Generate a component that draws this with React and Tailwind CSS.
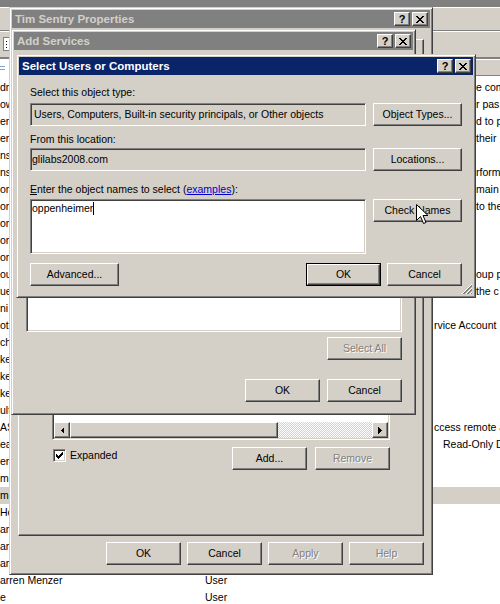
import React from "react";

const RAISED =
  "border border-t-white border-l-white border-r-[#404040] border-b-[#404040] shadow-[inset_-1px_-1px_0_#808080]";
const SUNKEN =
  "border border-t-[#808080] border-l-[#808080] border-r-white border-b-white shadow-[inset_1px_1px_0_#404040,inset_-1px_-1px_0_#d4d0c8] p-[1px]";

function Btn({ children, w = "w-[75px]", disabled = false }) {
  return (
    <div
      className={`${w} h-[23px] shrink-0 flex items-center justify-center bg-[#d4d0c8] ${RAISED} ${
        disabled ? "text-[#808080] [text-shadow:1px_1px_0_#fff]" : "text-black"
      }`}
    >
      {children}
    </div>
  );
}

function DefBtn({ children }) {
  return (
    <div className="w-[75px] h-[23px] shrink-0 border border-black flex">
      <div className={`flex-1 flex items-center justify-center bg-[#d4d0c8] ${RAISED}`}>{children}</div>
    </div>
  );
}

function CapBtn({ children }) {
  return (
    <div className={`w-[16px] h-[14px] shrink-0 bg-[#d4d0c8] flex items-center justify-center ${RAISED}`}>
      {children}
    </div>
  );
}

function XGlyph() {
  return (
    <svg width="8" height="7" viewBox="0 0 8 7" shapeRendering="crispEdges">
      <path d="M0 0h2l2 2.5L6 0h2L5 3.5 8 7H6L4 4.5 2 7H0l3-3.5z" fill="#000" />
    </svg>
  );
}

function Win({ title, active = false, className, children }) {
  return (
    <div
      className={`absolute flex flex-col bg-[#d4d0c8] border border-t-[#d4d0c8] border-l-[#d4d0c8] border-r-[#404040] border-b-[#404040] shadow-[inset_1px_1px_0_#fff,inset_-1px_-1px_0_#808080] p-[2px] ${className}`}
    >
      <div
        className={`h-[18px] shrink-0 flex items-center pl-[3px] pr-[2px] ${
          active ? "bg-[#0a246a] text-white" : "bg-[#808080] text-[#d4d0c8]"
        }`}
      >
        <span className="flex-1 font-bold text-[11.5px] leading-[14px] whitespace-nowrap">{title}</span>
        <CapBtn>
          <span className="font-bold text-[11px] leading-none text-black pt-[1px]">?</span>
        </CapBtn>
        <div className="w-[2px]" />
        <CapBtn>
          <XGlyph />
        </CapBtn>
      </div>
      {children}
    </div>
  );
}

const rows = [
  ["dm", "", "e com", "c"],
  ["ow", "", "r pas", "c"],
  ["ert", "", "d to p", "c"],
  ["en", "", "their", "c"],
  ["ns.", "", "", "c"],
  ["nsl", "", "rform", "c"],
  ["om", "", "main", "c"],
  ["om", "", "to the", "c"],
  ["om", "", "", "c"],
  ["om", "", "", "c"],
  ["om", "", "", "c"],
  ["ou", "", "oup p", "c"],
  ["ue", "", "the c", "c"],
  ["ni", "", "", "u"],
  ["ot", "", "rvice Account", "u"],
  ["ch", "", "", "u"],
  ["ke", "", "", "u"],
  ["ke", "", "", "u"],
  ["ke", "", "", "u"],
  ["ult", "", "", "u"],
  ["AS", "", "ccess remote a", "u"],
  ["ea", "", "Read-Only Do", "r"],
  ["en", "", "", "u"],
  ["m", "", "", "u"],
  ["m", "", "", "s"],
  ["He", "", "", "u"],
  ["am", "", "", "u"],
  ["am", "", "", "u"],
  ["am", "", "", "u"],
  ["arren Menzer", "User", "", "u"],
  ["e", "User", "", "u"],
];

function Background() {
  return (
    <div className="flex flex-col">
      <div className="h-[7px] bg-[#808080]" />
      <div className="h-[23px] bg-[#d4d0c8] border-t border-t-white" />
      <div className="h-[2px] border-y border-t-[#808080] border-b-white" />
      <div className="h-[25px] bg-[#d4d0c8] flex items-start">
        <div className="ml-[3px] mt-[5px] w-[7px] h-[14px] bg-white border border-[#808080] flex flex-col items-center justify-center gap-[2px]">
          <div className="w-[1px] h-[1px] bg-black" />
          <div className="w-[1px] h-[1px] bg-black" />
          <div className="w-[1px] h-[1px] bg-black" />
        </div>
      </div>
      <div className="h-[2px] bg-[#808080]" />
      <div className="h-[17px] flex">
        <div className="w-[10px] bg-white flex flex-col justify-center gap-[2px]">
          <div className="w-[5px] h-[1px] bg-[#7fa6d8]" />
          <div className="w-[5px] h-[1px] bg-[#7fa6d8]" />
        </div>
        <div className="flex-1 bg-[#d4d0c8] border-t border-t-white border-b border-b-[#808080]" />
      </div>
      <div className="h-[3px] bg-white" />
      {rows.map(([name, type, desc, kind], i) => (
        <div
          key={i}
          className={`h-[17px] shrink-0 flex items-center whitespace-nowrap text-black ${
            kind === "s" ? "bg-[#d4d0c8]" : "bg-white"
          }`}
        >
          <div className="w-[205px] shrink-0 overflow-hidden">{name}</div>
          <div className="w-[228px] shrink-0">{type}</div>
          <div
            className={`flex-1 overflow-hidden ${
              kind === "c" ? "pl-[43px]" : kind === "r" ? "pl-[10px]" : "pl-[1px]"
            }`}
          >
            {desc}
          </div>
        </div>
      ))}
    </div>
  );
}

function Arrow({ dir }) {
  return (
    <div className={`w-[16px] h-[16px] shrink-0 bg-[#d4d0c8] flex items-center justify-center ${RAISED}`}>
      <svg width="4" height="7" viewBox="0 0 4 7" shapeRendering="crispEdges">
        {dir === "l" ? <path d="M4 0v7L0.5 3.5z" fill="#000" /> : <path d="M0 0v7l3.5-3.5z" fill="#000" />}
      </svg>
    </div>
  );
}

function TimSentry() {
  return (
    <Win title="Tim Sentry Properties" className="left-[9px] top-[7px] w-[424px] h-[568px]">
      <div className="flex-1 flex flex-col px-[6px]">
        <div className="mt-[11px] h-[497px] flex flex-col pt-[40px] px-[33px] border border-t-white border-l-white border-r-[#404040] border-b-[#404040] shadow-[inset_-1px_-1px_0_#808080]">
          <div className={`h-[360px] bg-white flex flex-col justify-end ${SUNKEN}`}>
            <div className="h-[16px] flex">
              <Arrow dir="l" />
              <div className={`w-[208px] h-[16px] bg-[#d4d0c8] ${RAISED}`} />
              <div className="flex-1 bg-[image:repeating-conic-gradient(#d4d0c8_0%_25%,#ffffff_0%_50%)] bg-[length:2px_2px]" />
              <Arrow dir="r" />
            </div>
          </div>
          <div className="mt-[7px] flex items-start">
            <div className={`mt-[2px] ml-[1px] w-[13px] h-[13px] bg-white flex items-center justify-center ${SUNKEN} p-0`}>
              <svg width="7" height="7" viewBox="0 0 7 7" shapeRendering="crispEdges">
                <path d="M0 2h1v1h1v1h1V3h1V2h1V1h1V0h1v3H6v1H5v1H4v1H3v1H2V6H1V5H0z" fill="#000" />
              </svg>
            </div>
            <span className="ml-[4px] mt-[2px] leading-[13px]">Expanded</span>
            <div className="ml-auto flex gap-[8px]">
              <Btn>Add...</Btn>
              <Btn disabled>Remove</Btn>
            </div>
          </div>
        </div>
        <div className="mt-[6px] flex justify-end gap-[6px]">
          <Btn>OK</Btn>
          <Btn>Cancel</Btn>
          <Btn disabled>Apply</Btn>
          <Btn disabled>Help</Btn>
        </div>
      </div>
    </Win>
  );
}

function AddServices() {
  return (
    <Win title="Add Services" className="left-[11px] top-[29px] w-[405px] h-[386px]">
      <div className="flex-1 flex flex-col pl-[12px] pr-[11px]">
        <div className={`mt-[20px] h-[262px] bg-white ${SUNKEN}`} />
        <div className="mt-[5px] flex justify-end">
          <Btn disabled>Select All</Btn>
        </div>
        <div className="mt-[19px] flex justify-end gap-[7px]">
          <Btn>OK</Btn>
          <Btn>Cancel</Btn>
        </div>
      </div>
    </Win>
  );
}

function SelectUsers() {
  return (
    <Win title="Select Users or Computers" active className="left-[16px] top-[54px] w-[460px] h-[244px]">
      <div className="flex-1 flex flex-col px-[11px]">
        <div className="mt-[10px] leading-[14px]">Select this object type:</div>
        <div className="mt-[4px] flex gap-[7px]">
          <div className={`w-[336px] h-[23px] flex items-center pl-[3px] whitespace-nowrap ${SUNKEN}`}>
            Users, Computers, Built-in security principals, or Other objects
          </div>
          <Btn w="w-[89px]">Object Types...</Btn>
        </div>
        <div className="mt-[6px] leading-[14px]">From this location:</div>
        <div className="mt-[2px] flex gap-[7px]">
          <div className={`w-[336px] h-[23px] flex items-center pl-[1px] ${SUNKEN}`}>glilabs2008.com</div>
          <Btn w="w-[89px]">Locations...</Btn>
        </div>
        <div className="mt-[11px] leading-[14px]">
          <span className="underline">E</span>nter the object names to select (
          <span className="text-[#0000cc] underline">examples</span>):
        </div>
        <div className="mt-[3px] flex items-start gap-[7px]">
          <div className={`w-[336px] h-[55px] bg-white pl-[1px] pt-[2px] ${SUNKEN}`}>
            <div className="flex items-center leading-[13px]">
              <span>oppenheimer</span>
              <span className="inline-block w-[1px] h-[13px] bg-black" />
            </div>
          </div>
          <Btn w="w-[89px]">Check Names</Btn>
        </div>
        <div className="mt-[9px] flex items-start">
          <Btn w="w-[89px]">Advanced...</Btn>
          <div className="ml-auto flex gap-[6px]">
            <DefBtn>OK</DefBtn>
            <Btn>Cancel</Btn>
          </div>
        </div>
      </div>
      <svg
        className="absolute right-[2px] bottom-[2px]"
        width="12"
        height="12"
        viewBox="0 0 12 12"
        shapeRendering="crispEdges"
      >
        <path d="M11 1L1 11" stroke="#fff" />
        <path d="M11 2L2 11M11 3L3 11" stroke="#808080" />
        <path d="M11 5L5 11" stroke="#fff" />
        <path d="M11 6L6 11M11 7L7 11" stroke="#808080" />
        <path d="M11 9L9 11" stroke="#fff" />
        <path d="M11 10L10 11" stroke="#808080" />
      </svg>
    </Win>
  );
}

export default function App() {
  return (
    <div className="relative w-[500px] h-[604px] overflow-hidden bg-white font-['Liberation_Sans',Arial,sans-serif] text-[10.5px] leading-[13px] text-black">
      <Background />
      <TimSentry />
      <AddServices />
      <SelectUsers />
      <svg className="absolute left-[416px] top-[204px]" width="13" height="21" viewBox="0 0 13 21">
        <path
          d="M0.5 0.5 L0.5 16.5 L4.5 12.5 L7.5 19.5 L10 18.5 L7 11.5 L12 11.5 Z"
          fill="#fff"
          stroke="#000"
          strokeWidth="1"
          strokeLinejoin="miter"
        />
      </svg>
    </div>
  );
}
